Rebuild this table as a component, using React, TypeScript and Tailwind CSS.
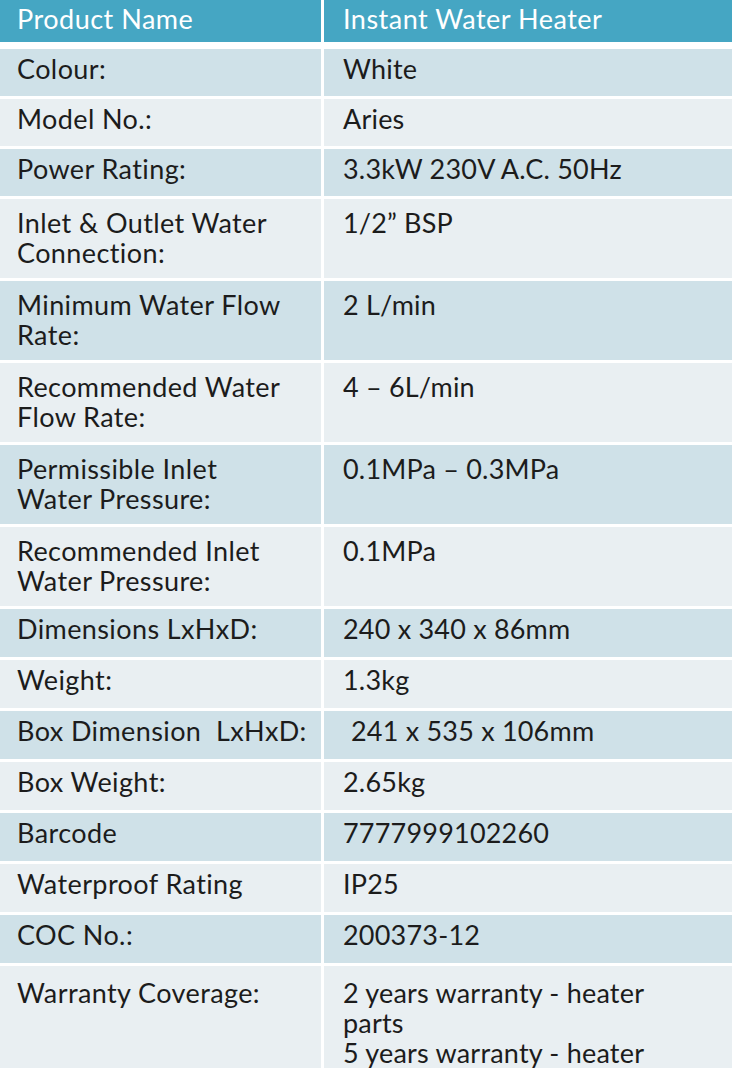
import React from "react";

type Row = { label: React.ReactNode; value: React.ReactNode; kind: "s1" | "d" | "s2" | "w"; blue: boolean };

const rows: Row[] = [
  { label: "Colour:", value: "White", kind: "s1", blue: true },
  { label: "Model No.:", value: "Aries", kind: "s1", blue: false },
  { label: "Power Rating:", value: "3.3kW 230V A.C. 50Hz", kind: "s1", blue: true },
  { label: <>Inlet &amp; Outlet Water<br />Connection:</>, value: "1/2\u201D BSP", kind: "d", blue: false },
  { label: <>Minimum Water Flow<br />Rate:</>, value: "2 L/min", kind: "d", blue: true },
  { label: <>Recommended Water<br />Flow Rate:</>, value: "4 \u2013 6L/min", kind: "d", blue: false },
  { label: <>Permissible Inlet<br />Water Pressure:</>, value: "0.1MPa \u2013 0.3MPa", kind: "d", blue: true },
  { label: <>Recommended Inlet<br />Water Pressure:</>, value: "0.1MPa", kind: "d", blue: false },
  { label: "Dimensions LxHxD:", value: "240 x 340 x 86mm", kind: "s2", blue: true },
  { label: "Weight:", value: "1.3kg", kind: "s2", blue: false },
  { label: <>Box Dimension&nbsp; LxHxD:</>, value: <span className="pl-[8px]">241 x 535 x 106mm</span>, kind: "s2", blue: true },
  { label: "Box Weight:", value: "2.65kg", kind: "s2", blue: false },
  { label: "Barcode", value: "7777999102260", kind: "s2", blue: true },
  { label: "Waterproof Rating", value: "IP25", kind: "s2", blue: false },
  { label: "COC No.:", value: "200373-12", kind: "s2", blue: true },
  {
    label: "Warranty Coverage:",
    value: (
      <>
        2 years warranty - heater
        <br />
        parts
        <br />
        5 years warranty - heater
      </>
    ),
    kind: "w",
    blue: false,
  },
];

function cellCls(kind: Row["kind"], blue: boolean) {
  const bg = blue ? "bg-[#cfe1e8]" : "bg-[#e9eff2]";
  if (kind === "s1") return `${bg} h-[47px] pt-[5px]`;
  if (kind === "s2") return `${bg} h-[48px] pt-[5px]`;
  if (kind === "d") return `${bg} h-[79px] pt-[9px]`;
  return `${bg} h-[130px] pt-[12px]`;
}

export default function App() {
  return (
    <div
      className="w-[734px] h-[1068px] overflow-hidden bg-white text-[#1c1c1c]"
      style={{ fontFamily: "Lato, 'Open Sans', sans-serif" }}
    >
      <div className="grid grid-cols-[321px_408px] gap-x-[3px] bg-white">
        <div className="h-[42px] bg-[#45a6c3] pl-[17px] pt-[3px] text-[27px] leading-[32px] font-normal text-white tracking-[0.5px]">
          Product Name
        </div>
        <div className="h-[42px] bg-[#45a6c3] pl-[19px] pt-[3px] text-[27px] leading-[32px] font-normal text-white tracking-[0.5px]">
          Instant Water Heater
        </div>
      </div>
      <div className="mt-[7px] grid grid-cols-[321px_408px] gap-x-[3px] gap-y-[3px]">
        {rows.map((r, i) => (
          <React.Fragment key={i}>
            <div className={`${cellCls(r.kind, r.blue)} pl-[17px] text-[27px] leading-[30px] tracking-[0.4px]`}>
              {r.label}
            </div>
            <div className={`${cellCls(r.kind, r.blue)} pl-[19px] text-[27px] leading-[30px] tracking-[0.2px]`}>
              {r.value}
            </div>
          </React.Fragment>
        ))}
      </div>
    </div>
  );
}
